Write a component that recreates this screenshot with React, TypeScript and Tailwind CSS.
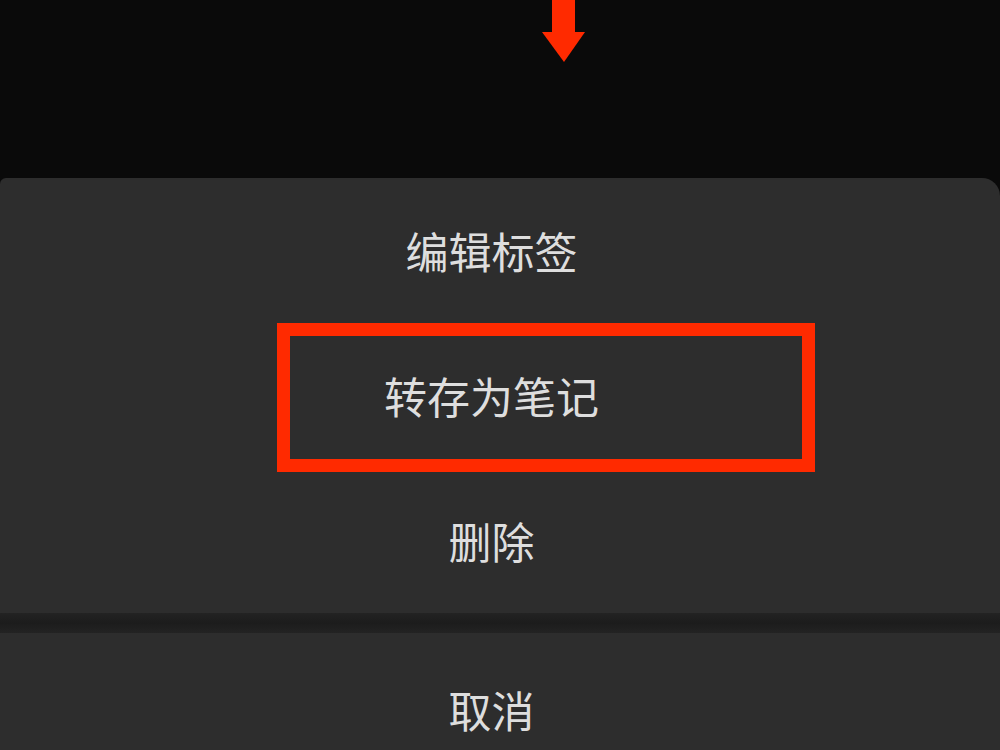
export default function App() {
  const items = ['编辑标签', '转存为笔记', '删除'];
  return (
    <div
      className="w-[1000px] h-[750px] overflow-hidden bg-[#0a0a0a] flex flex-col"
      style={{ fontFamily: '"Noto Sans CJK SC", "Noto Sans", sans-serif' }}
    >
      {/* top area with arrow */}
      <div className="h-[178px] shrink-0 flex justify-center">
        <svg width="44" height="64" viewBox="0 0 44 64" className="ml-[128px]">
          <rect x="10" y="0" width="23" height="33" fill="#ff2a00" />
          <polygon points="0,32 43,32 22,62" fill="#ff2a00" />
        </svg>
      </div>

      {/* action sheet */}
      <div className="relative bg-[#2d2d2d] rounded-tr-[18px] rounded-tl-[6px] shrink-0 flex flex-col">
        {items.map((t) => (
          <div key={t} className="h-[145px] flex items-center justify-center pr-[17px] text-[43px] text-[#dedede] leading-none">
            {t}
          </div>
        ))}
        <div className="absolute left-[277px] top-[145px] w-[538px] h-[149px] border-[13px] border-[#ff2a00]" />
      </div>

      <div className="h-[20px] shrink-0 bg-gradient-to-b from-[#232323] via-[#1c1c1c] to-[#232323]" />

      <div className="flex-1 bg-[#2d2d2d] flex justify-center pr-[17px] pt-[55px] text-[43px] text-[#dedede] leading-none">
        取消
      </div>
    </div>
  );
}
